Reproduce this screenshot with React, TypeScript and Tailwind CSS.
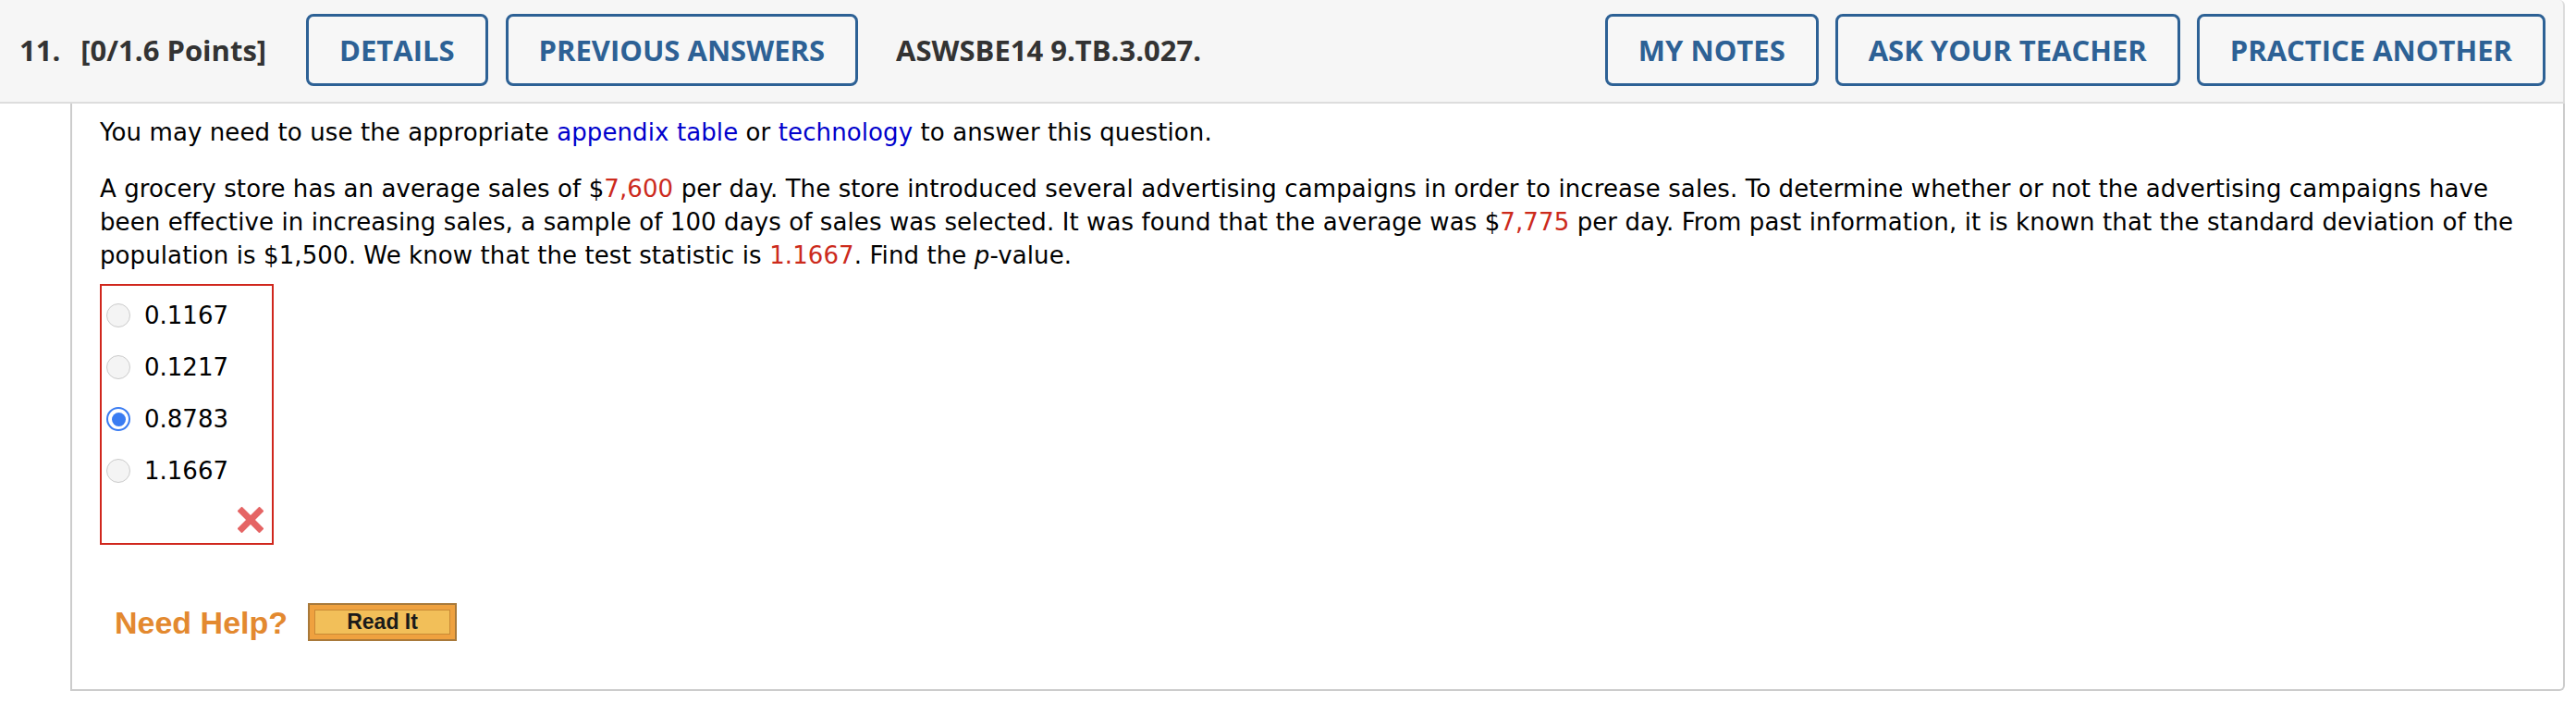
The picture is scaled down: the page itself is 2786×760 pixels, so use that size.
import React from 'react';

const headerButtons = {
  left: ['DETAILS', 'PREVIOUS ANSWERS'],
  right: ['MY NOTES', 'ASK YOUR TEACHER', 'PRACTICE ANOTHER'],
};

const options = [
  { value: '0.1167', selected: false },
  { value: '0.1217', selected: false },
  { value: '0.8783', selected: true },
  { value: '1.1667', selected: false },
];

const HeaderButton: React.FC<{ label: string }> = ({ label }) => (
  <button className="flex h-[78px] items-center rounded-[8px] border-[3px] border-[#2d6195] bg-[#f7f7f7] px-[33px] text-[31px] font-bold text-[#2d6195]">
    {label}
  </button>
);

const Radio: React.FC<{ selected: boolean }> = ({ selected }) =>
  selected ? (
    <span className="flex h-[26px] w-[26px] items-center justify-center rounded-full border-[2px] border-[#3a7cf2] bg-white">
      <span className="h-[15px] w-[15px] rounded-full bg-[#3a7cf2]" />
    </span>
  ) : (
    <span className="h-[26px] w-[26px] rounded-full border-[1.5px] border-[#cbcbcb] bg-[#f4f4f4]" />
  );

const RedX = () => (
  <svg width="28" height="28" viewBox="0 0 28 28">
    <path d="M4.5 4.5 L23.5 23.5 M23.5 4.5 L4.5 23.5" stroke="#e56464" strokeWidth="7" strokeLinecap="square" />
  </svg>
);

export default function App() {
  return (
    <div className="h-[760px] w-[2786px] bg-white">
      <div className="w-[2774px]">
        {/* question header */}
        <div className="flex h-[112px] items-center rounded-tr-[6px] border-b-2 border-r-2 border-[#dddddd] bg-[#f6f6f6] pl-[21px] pr-[19px] pb-[2px] font-['Open_Sans',sans-serif] text-[#333333]">
          <span className="text-[31px] font-bold">11.</span>
          <span className="ml-[22px] text-[31px] font-bold">[0/1.6 Points]</span>
          <div className="ml-[43px] flex gap-[19px]">
            {headerButtons.left.map((b) => (
              <HeaderButton key={b} label={b} />
            ))}
          </div>
          <span className="ml-[41px] text-[31px] font-bold">ASWSBE14 9.TB.3.027.</span>
          <div className="ml-auto flex gap-[18px]">
            {headerButtons.right.map((b) => (
              <HeaderButton key={b} label={b} />
            ))}
          </div>
        </div>

        {/* question body */}
        <div className="ml-[76px] h-[635px] rounded-br-[6px] border-b-2 border-l-2 border-r-2 border-[#cccccc] pl-[30px] pr-[20px] pt-[13px] font-['DejaVu_Sans',Verdana,sans-serif] text-[26px] leading-[36px] tracking-[0.1px] text-black">
          <p>
            You may need to use the appropriate <span className="text-[#0000cc]">appendix table</span> or{' '}
            <span className="text-[#0000cc]">technology</span> to answer this question.
          </p>
          <p className="mt-[25px]">
            A grocery store has an average sales of $<span className="text-[#cc2a1c]">7,600</span> per day. The store
            introduced several advertising campaigns in order to increase sales. To determine whether or not the
            advertising campaigns have
            <br />
            been effective in increasing sales, a sample of 100 days of sales was selected. It was found that the
            average was $<span className="text-[#cc2a1c]">7,775</span> per day. From past information, it is known
            that the standard deviation of the
            <br />
            population is $1,500. We know that the test statistic is{' '}
            <span className="text-[#cc2a1c]">1.1667</span>. Find the <i>p</i>-value.
          </p>

          <div className="mt-[13px] w-[188px] border-2 border-[#d0271d] pl-[5px] pr-[9px] pt-[4px] tracking-normal">
            {options.map((o) => (
              <div key={o.value} className="flex h-[56px] items-center gap-[15px]">
                <Radio selected={o.selected} />
                <span>{o.value}</span>
              </div>
            ))}
            <div className="flex h-[50px] items-center justify-end">
              <RedX />
            </div>
          </div>

          <div className="mt-[63px] flex items-center pl-[16px]">
            <span className="font-['Liberation_Sans',Arial,sans-serif] text-[34px] font-bold tracking-normal text-[#e3892f]">
              Need Help?
            </span>
            <div className="ml-[22px] flex h-[41px] w-[161px] items-center justify-center border-2 border-[#a8793a] bg-[#efa13f] p-[5px]">
              <div className="flex h-full w-full items-center justify-center border border-[#c98a35] bg-[#f2bf59] font-['Liberation_Sans',Arial,sans-serif] text-[23px] font-bold leading-none tracking-normal text-[#1a1a1a]">
                Read It
              </div>
            </div>
          </div>
        </div>
      </div>
    </div>
  );
}
